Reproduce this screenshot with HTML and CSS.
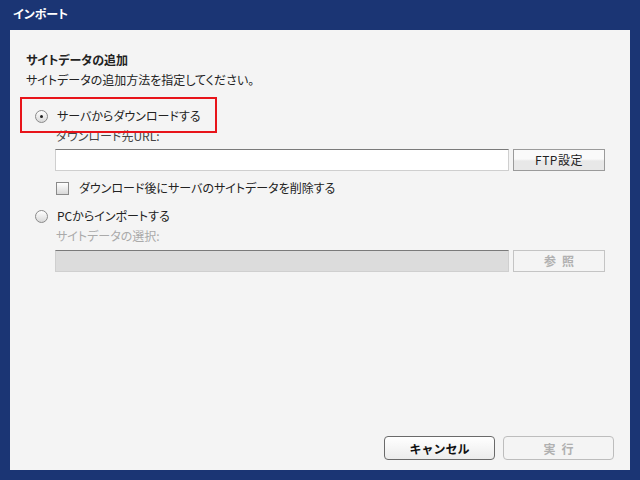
FILE: index.html
```html
<!DOCTYPE html>
<html lang="ja">
<head>
<meta charset="utf-8">
<title>インポート</title>
<link rel="stylesheet" href="styles.css">
</head>
<body>
<div class="window">
  <div class="title-bar">インポート</div>
  <div class="panel">
    <h1 class="heading">サイトデータの追加</h1>
    <p class="desc">サイトデータの追加方法を指定してください。</p>

    <div class="option option-first">
      <span class="radio checked"></span>
      <span class="option-label">サーバからダウンロードする</span>
      <span class="highlight"></span>
    </div>
    <div class="field-label">ダウンロード先URL:</div>
    <div class="field-row">
      <div class="text-input"></div>
      <button class="side-btn">FTP設定</button>
    </div>
    <div class="check-row">
      <span class="checkbox"></span>
      <span class="option-label">ダウンロード後にサーバのサイトデータを削除する</span>
    </div>

    <div class="option option-second">
      <span class="radio"></span>
      <span class="option-label">PCからインポートする</span>
    </div>
    <div class="field-label disabled">サイトデータの選択:</div>
    <div class="field-row field-row-second">
      <div class="text-input disabled"></div>
      <button class="side-btn disabled spaced">参照</button>
    </div>

    <div class="actions">
      <button class="action-btn">キャンセル</button>
      <button class="action-btn disabled spaced">実行</button>
    </div>
  </div>
</div>
</body>
</html>
```

FILE: styles.css
```css
html, body {
  margin: 0;
  padding: 0;
}
body {
  width: 640px;
  height: 480px;
  background: #1b3574;
  font-family: "Noto Sans CJK JP", "Noto Sans", "Liberation Sans", sans-serif;
  font-size: 12px;
  color: #222;
  overflow: hidden;
  font-feature-settings: "palt";
}
.window {
  display: flex;
  flex-direction: column;
  height: 480px;
}
.title-bar {
  height: 30px;
  line-height: 28px;
  padding-left: 13px;
  color: #fff;
  font-weight: bold;
  font-size: 12px;
}
.panel {
  margin: 0 10px;
  height: 440px;
  box-sizing: border-box;
  background: #f4f4f4;
  padding: 22px 16px 10px 16px;
  display: flex;
  flex-direction: column;
}
.heading {
  margin: 0;
  font-size: 12px;
  line-height: 16px;
  font-weight: bold;
}
.desc {
  margin: 4px 0 0;
  line-height: 16px;
}
.option {
  display: flex;
  align-items: center;
  height: 16px;
  line-height: 16px;
  position: relative;
}
.option-first {
  margin-top: 20px;
}
.option-second {
  margin-top: 12px;
}
.radio {
  width: 11px;
  height: 11px;
  border: 1px solid #8a8a8a;
  border-radius: 50%;
  margin-left: 9px;
  margin-right: 9px;
  background: linear-gradient(#ffffff, #d8d8d8);
  position: relative;
  flex: none;
}
.radio.checked::after {
  content: "";
  position: absolute;
  left: 4px;
  top: 4px;
  width: 3px;
  height: 3px;
  border-radius: 50%;
  background: #222;
}
.highlight {
  position: absolute;
  left: -6px;
  top: -11px;
  width: 193px;
  height: 32px;
  border: 2px solid #e8141a;
  pointer-events: none;
}
.field-label {
  margin-top: 5px;
  margin-left: 30px;
  line-height: 14px;
  color: #444;
}
.field-label.disabled {
  color: #aaa;
}
.field-row {
  display: flex;
  margin-top: 6px;
  margin-left: 29px;
  gap: 4px;
  height: 22px;
}
.field-row-second {
  margin-top: 7px;
}
.text-input {
  width: 454px;
  height: 22px;
  box-sizing: border-box;
  background: #fff;
  border: 1px solid #cfcfcf;
  border-top-color: #7a7a7a;
}
.text-input.disabled {
  background: #dcdcdc;
}
.side-btn {
  width: 92px;
  height: 22px;
  box-sizing: border-box;
  border: 1px solid #9a9a9a;
  background: linear-gradient(#fafafa 0%, #fafafa 45%, #e8e8e8 55%, #e8e8e8 100%);
  font-family: inherit;
  font-feature-settings: "palt";
  font-size: 12px;
  color: #222;
  padding: 0;
  line-height: 20px;
  letter-spacing: 0.5px;
}
.side-btn.disabled {
  border-color: #c4c4c4;
  color: #b0b0b0;
  background: #f4f4f4;
  font-weight: bold;
}
.spaced {
  letter-spacing: 6px;
  text-indent: 6px;
}
.check-row {
  display: flex;
  align-items: center;
  margin-top: 9px;
  height: 16px;
  line-height: 16px;
}
.checkbox {
  width: 11px;
  height: 11px;
  border: 1px solid #8a8a8a;
  background: linear-gradient(#ffffff, #d8d8d8);
  margin-left: 30px;
  margin-right: 10px;
  flex: none;
}
.actions {
  margin-top: auto;
  display: flex;
  justify-content: flex-end;
  gap: 8px;
}
.action-btn {
  width: 111px;
  height: 24px;
  box-sizing: border-box;
  border: 1px solid #6a6a6a;
  border-radius: 4px;
  background: linear-gradient(#ffffff, #ececec);
  font-family: inherit;
  font-size: 12px;
  font-weight: bold;
  color: #111;
  padding: 0;
}
.action-btn.disabled {
  border-color: #bdbdbd;
  color: #b0b0b0;
  background: #f4f4f4;
}
```
